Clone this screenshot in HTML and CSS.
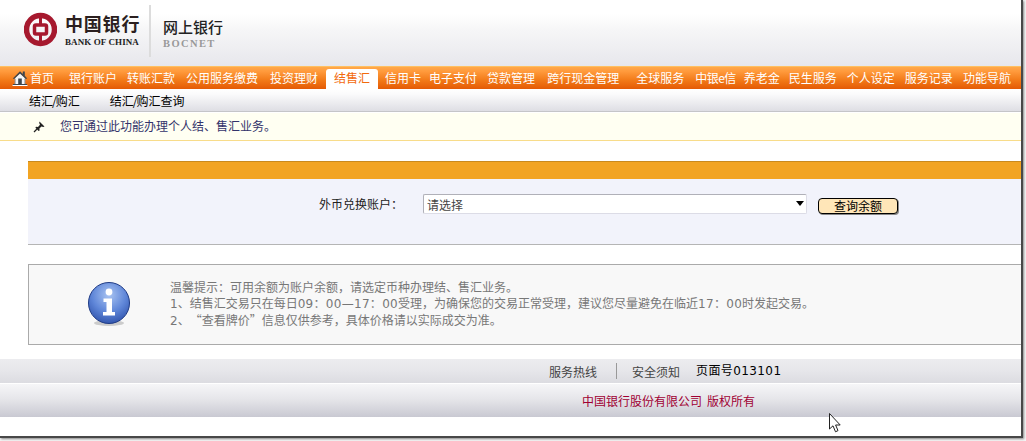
FILE: index.html
```html
<!DOCTYPE html>
<html lang="zh">
<head>
<meta charset="utf-8">
<title>网上银行</title>
<link rel="stylesheet" href="styles.css">
</head>
<body>
<div class="window">
  <header class="header">
    <div class="logo">
      <svg class="logo-mark" width="33" height="35" viewBox="0 0 33 35">
        <circle cx="16.5" cy="17.5" r="14" fill="none" stroke="#a6192e" stroke-width="5.5"/>
        <rect x="10.5" y="13" width="12" height="9" rx="1.5" fill="none" stroke="#a6192e" stroke-width="3.5"/>
        <rect x="15" y="2" width="3" height="10" fill="#a6192e"/>
        <rect x="15" y="23" width="3" height="10" fill="#a6192e"/>
      </svg>
      <div class="logo-bank">
        <div class="logo-cn">中国银行</div>
        <div class="logo-en">BANK OF CHINA</div>
      </div>
      <div class="logo-rule"></div>
      <div class="logo-net">
        <div class="net-cn">网上银行</div>
        <div class="net-en">BOCNET</div>
      </div>
    </div>
  </header>
  <nav class="nav">
    <svg class="home" width="16" height="16" viewBox="0 0 16 16">
      <path d="M3 14 V8 L8 3.5 L13 8 V14 Z" fill="#f4f6f8"/>
      <path d="M0.8 8.4 L8 1.2 L10.8 3.9 V1.6 L12.8 1.6 V5.8 L15.2 8.4 L13.8 9 L8 3.6 L2.2 9 Z" fill="#3f474f"/>
      <rect x="6.2" y="8.5" width="3.6" height="5.5" fill="#3f474f"/>
      <rect x="2.6" y="8.6" width="1" height="5.4" fill="#8b949c"/>
      <rect x="12.4" y="8.6" width="1" height="5.4" fill="#8b949c"/>
      <rect x="1" y="14" width="14" height="1" fill="#3f474f"/>
      <rect x="0.5" y="15" width="15" height="1" fill="#fff"/>
    </svg>
    <a class="item first">首页</a>
    <a class="item g16">银行账户</a>
    <a class="item">转账汇款</a>
    <a class="item g11">公用服务缴费</a>
    <a class="item g12">投资理财</a>
    <a class="tab">结售汇</a>
    <a class="item g7">信用卡</a>
    <a class="item g8">电子支付</a>
    <a class="item">贷款管理</a>
    <a class="item g12">跨行现金管理</a>
    <a class="item g17">全球服务</a>
    <a class="item g11 tight">中银e信</a>
    <a class="item g6">养老金</a>
    <a class="item g9">民生服务</a>
    <a class="item">个人设定</a>
    <a class="item">服务记录</a>
    <a class="item">功能导航</a>
  </nav>
  <div class="subnav">
    <a class="sub">结汇<span class="slash">/</span>购汇</a>
    <a class="sub">结汇<span class="slash">/</span>购汇查询</a>
  </div>
  <div class="notice">
    <svg class="pin" width="12" height="12" viewBox="0 0 12 12">
      <path d="M6.5 0.5 L11.5 5.5 L10.2 6 L8.4 5.4 L6.4 7.6 L6.6 9.6 L5.6 10 L2.4 6.8 L3 5.8 L5 6 L7 3.8 L6.2 2 Z" fill="#222"/>
      <path d="M4 8 L1 11" stroke="#222" stroke-width="1.2"/>
    </svg>
    <span class="notice-text">您可通过此功能办理个人结、售汇业务。</span>
  </div>
  <main class="content">
    <section class="panel">
      <div class="panel-bar"></div>
      <div class="panel-body">
        <label class="field-label">外币兑换账户：</label>
        <div class="select-wrap">
          <select class="select"><option>请选择</option></select>
          <span class="arrow"></span>
        </div>
        <button class="query" type="button">查询余额</button>
      </div>
    </section>
    <section class="tips">
      <svg class="info" width="46" height="46" viewBox="0 0 46 46">
        <defs>
          <radialGradient id="orb" cx="50%" cy="30%" r="75%">
            <stop offset="0" stop-color="#a9c4f2"/>
            <stop offset="0.55" stop-color="#5f86d8"/>
            <stop offset="1" stop-color="#2c4fa8"/>
          </radialGradient>
        </defs>
        <ellipse cx="23" cy="42" rx="15" ry="3" fill="#ccc"/>
        <circle cx="23" cy="22" r="20.5" fill="url(#orb)" stroke="#1f3b85" stroke-width="1"/>
        <circle cx="23" cy="11" r="3.4" fill="#fff"/>
        <path d="M17.5 17.5 H26 V31 H29 V34.5 H17 V31 H20.5 V21 H17.5 Z" fill="#fff"/>
      </svg>
      <div class="tips-text">
        <p>温馨提示：可用余额为账户余额，请选定币种办理结、售汇业务。</p>
        <p>1、结售汇交易只在每日<span class="time">09：00—17：00</span>受理，为确保您的交易正常受理，建议您尽量避免在临近<span class="time">17：00</span>时发起交易。</p>
        <p>2、<span class="quote">“</span>查看牌价<span class="quote">”</span>信息仅供参考，具体价格请以实际成交为准。</p>
      </div>
    </section>
  </main>
  <footer class="footer">
    <div class="foot-links">
      <a class="foot-link">服务热线</a>
      <span class="foot-rule"></span>
      <a class="foot-link">安全须知</a>
      <span class="page-no">页面号013101</span>
    </div>
    <div class="foot-copy">
      <span>中国银行股份有限公司</span>
      <span>版权所有</span>
    </div>
  </footer>
  <svg class="cursor" width="12" height="20" viewBox="0 0 12 20">
    <path d="M0.5 0.5 V16 L4 12.8 L6.5 18.8 L9 17.6 L6.6 12 H11.2 Z" fill="#fff" stroke="#222" stroke-width="1"/>
  </svg>
</div>
</body>
</html>
```
FILE: styles.css
```css
* { box-sizing: border-box; }
html, body { margin: 0; padding: 0; height: 100%; overflow: hidden; background: #f4f4f4; }
body { font: 12px/16px "Noto Sans CJK SC", "Liberation Sans", sans-serif; color: #000; }
.window {
  position: relative;
  width: 1023px;
  height: 438px;
  background: #fff;
  border-right: 2px solid #484848;
  border-bottom: 2px solid #484848;
  box-shadow: 1px 1px 2px #888;
  overflow: hidden;
}
.header { height: 66px; background: linear-gradient(#fff 0, #fff 14px, #f6f6f7 30px, #e7e7ec 100%); }
.logo { display: flex; align-items: flex-start; padding-left: 24px; }
.logo-mark { margin-top: 12px; flex: none; }
.logo-bank { margin: 11px 0 0 8px; width: 84px; }
.logo-cn { font: 700 18px/24px "Noto Sans CJK SC", sans-serif; letter-spacing: 0.8px; color: #2b1f1f; }
.logo-en { font: 700 9px/10px "Liberation Serif", serif; color: #222; margin-top: 2px; letter-spacing: 0.1px; }
.logo-rule { width: 2px; height: 52px; margin-top: 5px; background: #dcdcdc; }
.logo-net { margin: 17px 0 0 12px; }
.net-cn { font: 500 15px/20px "Noto Sans CJK SC", sans-serif; color: #222; }
.net-en { font: 700 10.5px/10px "Liberation Serif", serif; color: #999; letter-spacing: 1.4px; margin-top: 2px; }
.nav {
  display: flex;
  align-items: flex-end;
  height: 23px;
  gap: 10px;
  padding-left: 12px;
  background: linear-gradient(#ffa84a 0, #ff9a3c 20%, #f27a18 60%, #e45a05 100%);
  border-top: 1px solid #ffc060;
}
.home { flex: none; margin-bottom: 3px; margin-right: -8px; }
.item, .tab { color: #fff; white-space: nowrap; line-height: 22px; height: 22px; }
.item.first { margin-right: -1px; }
.tight { letter-spacing: -0.5px; }
.g16 { margin-left: 6px; }
.g11 { margin-left: 1px; }
.g12 { margin-left: 2px; }
.g7 { margin-left: -3px; }
.g8 { margin-left: -2px; }
.g17 { margin-left: 7px; }
.g9 { margin-left: -1px; }
.g6 { margin-left: -2px; }
.tab {
  width: 52px;
  height: 20px;
  margin-left: -2px;
  padding-left: 8px;
  line-height: 18px;
  color: #f26a0c;
  background: #fff;
  border-radius: 3px 3px 0 0;
}
.subnav {
  display: flex;
  height: 23px;
  gap: 30px;
  padding: 4px 0 0 29px;
  background: linear-gradient(#fff 0, #fafafb 25%, #dedee4 100%);
  border-bottom: 1px solid #c5c5c8;
}
.sub { line-height: 16px; }
.slash { margin: 0 -1px; }
.notice {
  display: flex;
  align-items: center;
  height: 28px;
  margin-top: 1px;
  padding: 0 0 1px 33px;
  gap: 15px;
  color: #33336b;
  background: #fffff2;
  border-bottom: 1px solid #f8dc8a;
}
.pin { flex: none; margin-top: 1px; }
.content { padding: 20px 0 0 28px; }
.panel-bar { height: 18px; background: #f2a423; border-top: 1px solid #c98a1e; }
.panel-body {
  display: flex;
  align-items: flex-start;
  height: 66px;
  padding: 15px 0 0 291px;
  background: #f2f3fb;
  border-bottom: 1px solid #b5b5b5;
  color: #222;
}
.field-label { width: 104px; line-height: 18px; margin-top: 1px; }
.select-wrap { position: relative; width: 384px; height: 20px; }
.select {
  display: block;
  width: 100%;
  height: 100%;
  padding: 0 0 0 3px;
  border: 1px solid #b0b0b8;
  border-bottom-color: #dcdce6;
  border-right-color: #dcdce6;
  border-radius: 2px;
  background: #fff;
  font: 12px "Noto Sans CJK SC", sans-serif;
  color: #444;
  appearance: none;
}
.arrow {
  position: absolute;
  right: 3px;
  top: 7px;
  border: 4px solid transparent;
  border-top: 5px solid #000;
  border-bottom: 0;
}
.query {
  width: 80px;
  height: 16px;
  margin: 4px 0 0 11px;
  padding: 0;
  font: 12px/14px "Noto Sans CJK SC", sans-serif;
  color: #000;
  background: #ffe6b8;
  border: 1px solid #000;
  border-radius: 4px;
  box-shadow: 1px 1px 0 #888;
}
.tips {
  display: flex;
  align-items: flex-start;
  height: 81px;
  margin-top: 19px;
  padding: 15px 0 0 57px;
  background: #f8f8f8;
  border: 1px solid #aaa;
  border-right: 0;
}
.info { flex: none; margin-top: 1px; }
.tips-text { margin: 0 0 0 38px; color: #777; font-family: "DejaVu Sans", "Noto Sans CJK SC", sans-serif; }
.tips-text p { margin: 0; line-height: 16px; white-space: nowrap; }
.time { letter-spacing: 0.3px; }
.quote { display: inline-block; width: 12px; font-family: "Noto Sans CJK SC", sans-serif; }
.quote:first-child { text-align: right; }
.footer { margin-top: 14px; }
.foot-links {
  display: flex;
  align-items: center;
  height: 24px;
  padding-left: 549px;
  color: #444;
  background: linear-gradient(#ececef 0, #e6e6ea 50%, #dcdce1 100%);
}
.foot-link { margin-top: 2px; }
.foot-rule { width: 1px; height: 16px; margin: 0 15px 0 19px; background: #999; }
.page-no { margin-left: 16px; color: #000; letter-spacing: 0.4px; font-family: "DejaVu Sans", "Noto Sans CJK SC", sans-serif; }
.foot-copy {
  display: flex;
  align-items: center;
  gap: 5px;
  height: 34px;
  padding-left: 582px;
  color: #a00033;
  background: linear-gradient(#f6f6f8 0, #e6e6ea 45%, #c9c9d2 100%);
  border-top: 1px solid #fff;
}
.cursor { position: absolute; left: 829px; top: 413px; }
```
